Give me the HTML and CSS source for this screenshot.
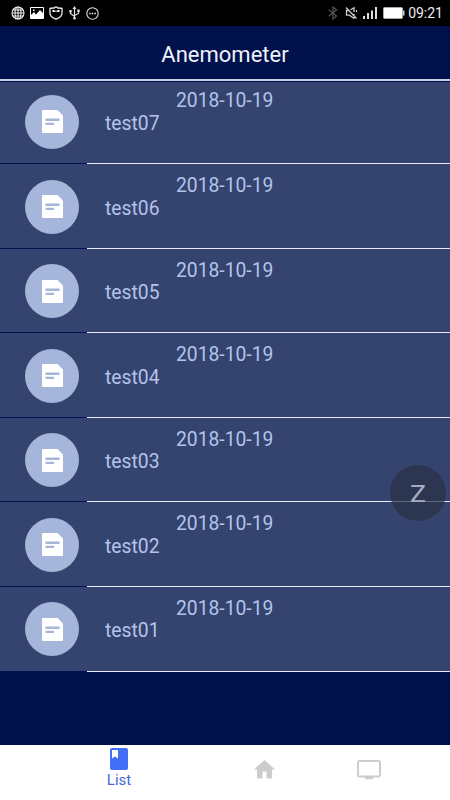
FILE: index.html
```html
<!DOCTYPE html>
<html lang="en">
<head>
  <meta charset="UTF-8" />
  <meta name="viewport" content="width=device-width, initial-scale=1" />
  <title>Anemometer</title>
  <link rel="stylesheet" href="styles.css">
</head>
<body>
  <svg class="sprite" width="0" height="0">
    <symbol id="note" viewBox="0 0 21 23">
      <path fill="#fff" d="M1 0H15.500L21 5.500V22Q21 23 20 23H1Q0 23 0 22V1Q0 0 1 0z" />
      <path fill="#a5b6da" d="M3.500 8.500h14v2.500h-14zM3.500 12.700h8.500v2.300h-8.500z" />
    </symbol>
  </svg>

  <div class="status-bar">
    <div class="status-left">
      <svg width="14" height="14" viewBox="0 0 14 14" fill="none" stroke="#eee" stroke-width="1.100">
        <circle cx="7" cy="7" r="6" />
        <ellipse cx="7" cy="7" rx="3" ry="6" />
        <path d="M7 1v12M1 7h12M2 4h10M2 10h10" />
      </svg>
      <svg width="14" height="12" viewBox="0 0 14 12">
        <path fill="none" stroke="#fff" d="M.5.500h13v11H.5z" />
        <path fill="#fff" d="M1 11V8l3-3 2 2.500L10 3l3 3v5zM3 2.500h1.500V4H3z" />
      </svg>
      <svg width="14" height="14" viewBox="0 0 14 14">
        <path fill="none" stroke="#eee" stroke-width="1.300" d="M7 .8 9 2l4 .3V7c0 3-2.500 5-6 6.200C3.500 12 1 10 1 7V2.300L5 2z" />
        <path fill="#fff" d="M3.500 4h1.500l1 .8h2L9 4h1.500v2H8.500L7.500 5.500h-1L5.500 6h-2z" />
      </svg>
      <svg width="11" height="14" viewBox="0 0 11 14" fill="none" stroke="#ddd" stroke-width="1.200">
        <path d="M5.500 2v10M1.500 5v2.500l4 3M9.500 4.500v3l-4 2" />
        <path fill="#ddd" stroke="none" d="M5.500 0 7.500 3h-4zM.3 4h2.400v2.400H.3zM8.300 3.500h2.400v2.400H8.300z" />
        <circle cx="5.500" cy="12.200" r="1.300" fill="#ddd" stroke="none" />
      </svg>
      <svg width="13" height="13" viewBox="0 0 13 13">
        <circle cx="6.500" cy="6.500" r="5.700" fill="none" stroke="#ddd" stroke-width="1.100" />
        <path fill="#eee" d="M3.200 5.800h1.500v1.400H3.200zM5.800 5.800h1.500v1.400H5.800zM8.400 5.800h1.500v1.400H8.400z" />
      </svg>
    </div>
    <div class="status-right">
      <svg class="bluetooth" width="10" height="14" viewBox="0 0 10 14" fill="none" stroke="#555" stroke-width="1.200">
        <path d="M.7 3.800 8.500 10 5 13V1l3.500 3L.7 10.200" />
      </svg>
      <svg class="mute" width="13" height="12" viewBox="0 0 13 12" fill="none" stroke="#ccc" stroke-width="1.300">
        <path d="M4 3.500H1.500v4.700h2.700L9 11.200V7M5.500 2.800 9 .8V5M1 .5l10.500 11M11.500 3v2" />
      </svg>
      <svg class="signal" width="14" height="12" viewBox="0 0 14 12" fill="#ddd">
        <path d="M0 9h2v3H0zM4 6h2v6H4zM8 3.500h2V12H8zM12 0h2v12h-2z" />
      </svg>
      <svg class="battery" width="22" height="12" viewBox="0 0 22 12">
        <path fill="#fff" stroke="#aaa" d="M1.500.5h17q1 0 1 1v9q0 1-1 1h-17q-1 0-1-1v-9q0-1 1-1z" />
        <path fill="#ccc" d="M20 3.500h1.500v5H20z" />
      </svg>
      <span class="clock">09:21</span>
    </div>
  </div>

  <header class="title-bar">
    <h1>Anemometer</h1>
  </header>

  <main class="list">
    <div class="row">
      <div class="avatar"><svg><use href="#note" /></svg></div>
      <div class="info"><span class="date">2018-10-19</span><span class="name">test07</span></div>
    </div>
    <div class="row">
      <div class="avatar"><svg><use href="#note" /></svg></div>
      <div class="info"><span class="date">2018-10-19</span><span class="name">test06</span></div>
    </div>
    <div class="row">
      <div class="avatar"><svg><use href="#note" /></svg></div>
      <div class="info"><span class="date">2018-10-19</span><span class="name">test05</span></div>
    </div>
    <div class="row">
      <div class="avatar"><svg><use href="#note" /></svg></div>
      <div class="info"><span class="date">2018-10-19</span><span class="name">test04</span></div>
    </div>
    <div class="row">
      <div class="avatar"><svg><use href="#note" /></svg></div>
      <div class="info"><span class="date">2018-10-19</span><span class="name">test03</span></div>
    </div>
    <div class="row">
      <div class="avatar"><svg><use href="#note" /></svg></div>
      <div class="info"><span class="date">2018-10-19</span><span class="name">test02</span></div>
    </div>
    <div class="row">
      <div class="avatar"><svg><use href="#note" /></svg></div>
      <div class="info"><span class="date">2018-10-19</span><span class="name">test01</span></div>
    </div>
  </main>

  <nav class="tabs">
    <a class="tab tab-list">
      <svg width="18" height="22" viewBox="0 0 18 22">
        <rect width="18" height="22" rx="2" fill="#426ff5" />
        <path fill="#fff" d="M2 2h6v8.500L5 8.500 2 10.500z" />
      </svg>
      <span>List</span>
    </a>
    <a class="tab tab-home">
      <svg width="21" height="19" viewBox="0 0 21 19">
        <path fill="#ccc" d="M10.500 0 21 9.500h-3V18.500h-5.500v-7h-4v7H3v-9H0z" />
      </svg>
    </a>
    <a class="tab tab-screen">
      <svg width="24" height="20" viewBox="0 0 24 20">
        <rect x="1" y="1" width="22" height="15.500" rx="1.500" fill="none" stroke="#ccc" stroke-width="2" />
        <path fill="#ccc" d="M8 17h8v2.200H8z" />
      </svg>
    </a>
  </nav>

  <button class="float-btn"><span>Z</span></button>
</body>
</html>
```

FILE: styles.css
```css
:root {
  --navy: #01114b;
  --row: #35436f;
  --text: #b3c4e8;
  --line: #e6e9f5;
}

* {
  box-sizing: border-box;
  margin: 0;
  padding: 0;
}

body {
  font-family: Roboto, sans-serif;
  background: var(--navy);
  width: 450px;
  height: 800px;
  display: flex;
  flex-direction: column;
  overflow: hidden;
  position: relative;
}

svg {
  display: block;
  flex: none;
}

.sprite {
  position: absolute;
}

.status-bar {
  height: 26px;
  background: #000;
  display: flex;
  justify-content: space-between;
  padding: 0 7px 0 11px;
}

.status-left,
.status-right {
  display: flex;
  align-items: center;
}

.status-left {
  gap: 5px;
}

.status-left svg:nth-child(4) {
  margin: 0 1px;
}

.bluetooth {
  margin-right: 7px;
}

.mute {
  margin-right: 5px;
}

.signal {
  margin-right: 6px;
}

.battery {
  margin-right: 3px;
}

.clock {
  font-size: 14px;
  line-height: 26px;
  color: #eee;
}

.title-bar {
  height: 56px;
  background: var(--navy);
  border-bottom: 1px solid var(--navy);
  box-shadow: inset 0 -2px #c9cfe4;
  display: flex;
  align-items: center;
  justify-content: center;
  position: relative;
  z-index: 1;
}

.title-bar h1 {
  font-size: 22px;
  font-weight: 400;
  line-height: 26px;
  padding-top: 2px;
  color: #eef1fb;
}

/* first row slides under the title bar line */
.list {
  flex: 1;
  margin-top: -2.600px;
}

.row {
  height: 84.600px;
  display: flex;
  background: var(--row);
  border-bottom: 1px solid var(--navy);
}

.avatar {
  width: 54px;
  height: 54px;
  margin: 15.500px 8px 0 25px;
  border-radius: 50%;
  background: #a5b6da;
  display: flex;
  align-items: center;
  justify-content: center;
  flex: none;
}

.avatar svg {
  width: 21px;
  height: 23px;
}

.info {
  flex: 1;
  margin-bottom: -1px;
  padding: 11px 0 0 18px;
  border-bottom: 1px solid var(--line);
  display: flex;
  flex-direction: column;
  color: var(--text);
  font-size: 19.300px;
  line-height: 22.500px;
}

.date {
  margin-left: 71px;
}

.tabs {
  height: 55px;
  background: #fff;
  display: grid;
  grid-template-columns: 190px 148px 112px;
}

.tab {
  display: flex;
  flex-direction: column;
}

.tab-list {
  align-items: center;
  padding: 3px 0 0 48px;
  color: #4468d8;
  font-size: 15px;
  line-height: 20px;
}

.tab-home {
  padding: 15px 0 0 63.500px;
}

.tab-screen {
  padding: 15px 0 0 19px;
}

.float-btn {
  position: absolute;
  left: 390px;
  top: 465px;
  width: 56px;
  height: 56px;
  border: none;
  border-radius: 50%;
  background: rgba(43, 49, 67, 0.7);
  color: #a3adc5;
  font: 24px/56px Roboto, sans-serif;
  padding-top: 1px;
}

.float-btn span {
  display: block;
  transform: scaleX(1.120);
}
```
